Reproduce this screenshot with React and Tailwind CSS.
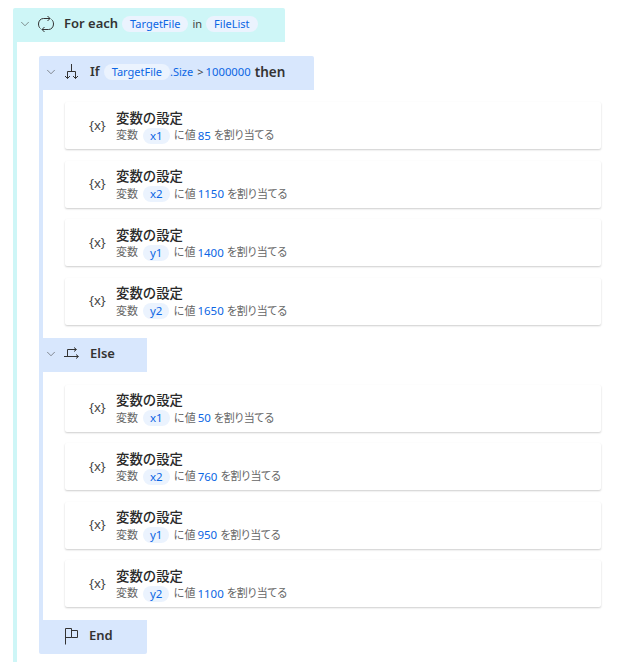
import React from "react";
import { ChevronDown } from "lucide-react";

const FONT = "font-['Noto_Sans','Noto_Sans_CJK_JP',sans-serif]";

const Pill = ({ children, className = "" }) => (
  <span className={`inline-flex h-[16px] items-center rounded-full bg-[#ebf3fe] text-[#0b66e4] ${className}`}>
    {children}
  </span>
);

const LoopIcon = () => (
  <svg width="16" height="18" viewBox="0 0 16 18" fill="none" stroke="#333" strokeWidth="1" className="shrink-0">
    <path d="M5.5 3.5H12M9.5 1L12 3.5L9.5 6" />
    <path d="M13.5 4.5C15 5.5 15.5 7.5 15.5 9C15.5 12 13.5 14.5 10.5 14.5H4M6.5 12L4 14.5L6.5 17" />
    <path d="M2.5 13.5C1 12.5 0.5 10.5 0.5 9C0.5 6 2.5 3.5 5.5 3.5" />
  </svg>
);

const IfIcon = () => (
  <svg width="16" height="18" viewBox="0 0 16 18" fill="none" stroke="#333" strokeWidth="1" className="shrink-0">
    <path d="M7.5 1V8.5M3.5 15.5V8.5H11.5V15.5" />
    <path d="M1 13L3.5 15.5L6 13M9 13L11.5 15.5L14 13" />
  </svg>
);

const ElseIcon = () => (
  <svg width="16" height="14" viewBox="0 0 16 14" fill="none" stroke="#333" strokeWidth="1" className="shrink-0">
    <path d="M3.5 9.5V2.5H12M0 9.5H14" />
    <path d="M10 0.5L12.5 2.5L10 4.5M12 7.5L14.5 9.5L12 11.5" />
  </svg>
);

const FlagIcon = () => (
  <svg width="15" height="17" viewBox="0 0 15 17" fill="none" stroke="#333" strokeWidth="1" className="shrink-0">
    <path d="M1.5 16.5V0.5H7.5V9.5H1.5" />
    <path d="M7.5 2.5H13.5V9.5H7.5" />
  </svg>
);

const Card = ({ name, value, first }) => (
  <div className={`${first ? "" : "mt-[11.5px]"} ml-[22px] flex h-[47px] w-[536px] items-center rounded-[2px] bg-white pl-[24px] shadow-[0_1px_2px_rgba(0,0,0,0.2)]`}>
    <span className="w-[27px] shrink-0 text-[13px] text-[#444]">{"{x}"}</span>
    <div className="flex flex-col pt-[2px]">
      <div className="text-[13.4px] leading-[16px] font-medium text-[#292929]">変数の設定</div>
      <div className="mt-[2px] flex h-[16px] items-center text-[11px] text-[#666]">
        <span>変数</span>
        <Pill className="mr-[4px] ml-[5px] px-[7px] text-[11.5px]">{name}</Pill>
        <span>に値</span>
        <span className="mr-[3px] ml-[2px] text-[11.5px] text-[#0b66e4]">{value}</span>
        <span className="tracking-[-1px]">を割り当てる</span>
      </div>
    </div>
  </div>
);

const thenVars = [
  ["x1", "85"],
  ["x2", "1150"],
  ["y1", "1400"],
  ["y2", "1650"],
];
const elseVars = [
  ["x1", "50"],
  ["x2", "760"],
  ["y1", "950"],
  ["y2", "1100"],
];

export default function App() {
  return (
    <div className={`${FONT} h-[662px] w-[620px] overflow-hidden bg-white pt-2 pl-[13px]`}>
      <div className="flex h-[34px] w-[272px] items-center rounded-t-[2px] bg-[#cef6f7] pb-[2px] pl-[5px] text-[11px]">
        <ChevronDown size={14} strokeWidth={1} className="mr-[6px] text-[#444]" />
        <LoopIcon />
        <span className="mr-[4px] ml-[10px] text-[13px] font-semibold text-[#333]">For each</span>
        <Pill className="px-[8px]">TargetFile</Pill>
        <span className="mx-[4px] text-[#444]">in</span>
        <Pill className="px-[8px]">FileList</Pill>
      </div>

      <div className="border-l-4 border-[#cef6f7] pt-[14px] pl-[22px]">
        <div className="flex h-[34px] w-[275px] items-center rounded-t-[2px] bg-[#d8e7fd] pb-[2px] pl-[5px] text-[11px]">
          <ChevronDown size={14} strokeWidth={1} className="mr-[6px] text-[#444]" />
          <IfIcon />
          <span className="mr-[4px] ml-[10px] text-[13px] font-semibold text-[#333]">If</span>
          <Pill className="px-[8px]">TargetFile</Pill>
          <span className="text-[#0b66e4]">.Size</span>
          <span className="ml-[4px] text-[#444]">&gt;</span>
          <span className="ml-[2px] text-[11.3px] text-[#0b66e4]">1000000</span>
          <span className="ml-[4px] text-[13.5px] font-semibold text-[#333]">then</span>
        </div>

        <div className="border-l-4 border-[#d8e7fd] pt-[12px] pb-[13px]">
          {thenVars.map(([name, value], i) => (
            <Card key={name} name={name} value={value} first={i === 0} />
          ))}
        </div>

        <div className="flex h-[34px] w-[108px] items-center bg-[#d8e7fd] pb-[2px] pl-[5px]">
          <ChevronDown size={14} strokeWidth={1} className="mr-[6px] text-[#444]" />
          <ElseIcon />
          <span className="ml-[10px] text-[13px] font-semibold text-[#333]">Else</span>
        </div>

        <div className="border-l-4 border-[#d8e7fd] pt-[13px] pb-[13px]">
          {elseVars.map(([name, value], i) => (
            <Card key={name} name={name} value={value} first={i === 0} />
          ))}
        </div>

        <div className="flex h-[34px] w-[108px] items-center rounded-b-[2px] bg-[#d8e7fd] pb-[2px] pl-[25px]">
          <FlagIcon />
          <span className="ml-[10px] text-[13px] font-semibold text-[#333]">End</span>
        </div>
        <div className="h-[20px]" />
      </div>
    </div>
  );
}
